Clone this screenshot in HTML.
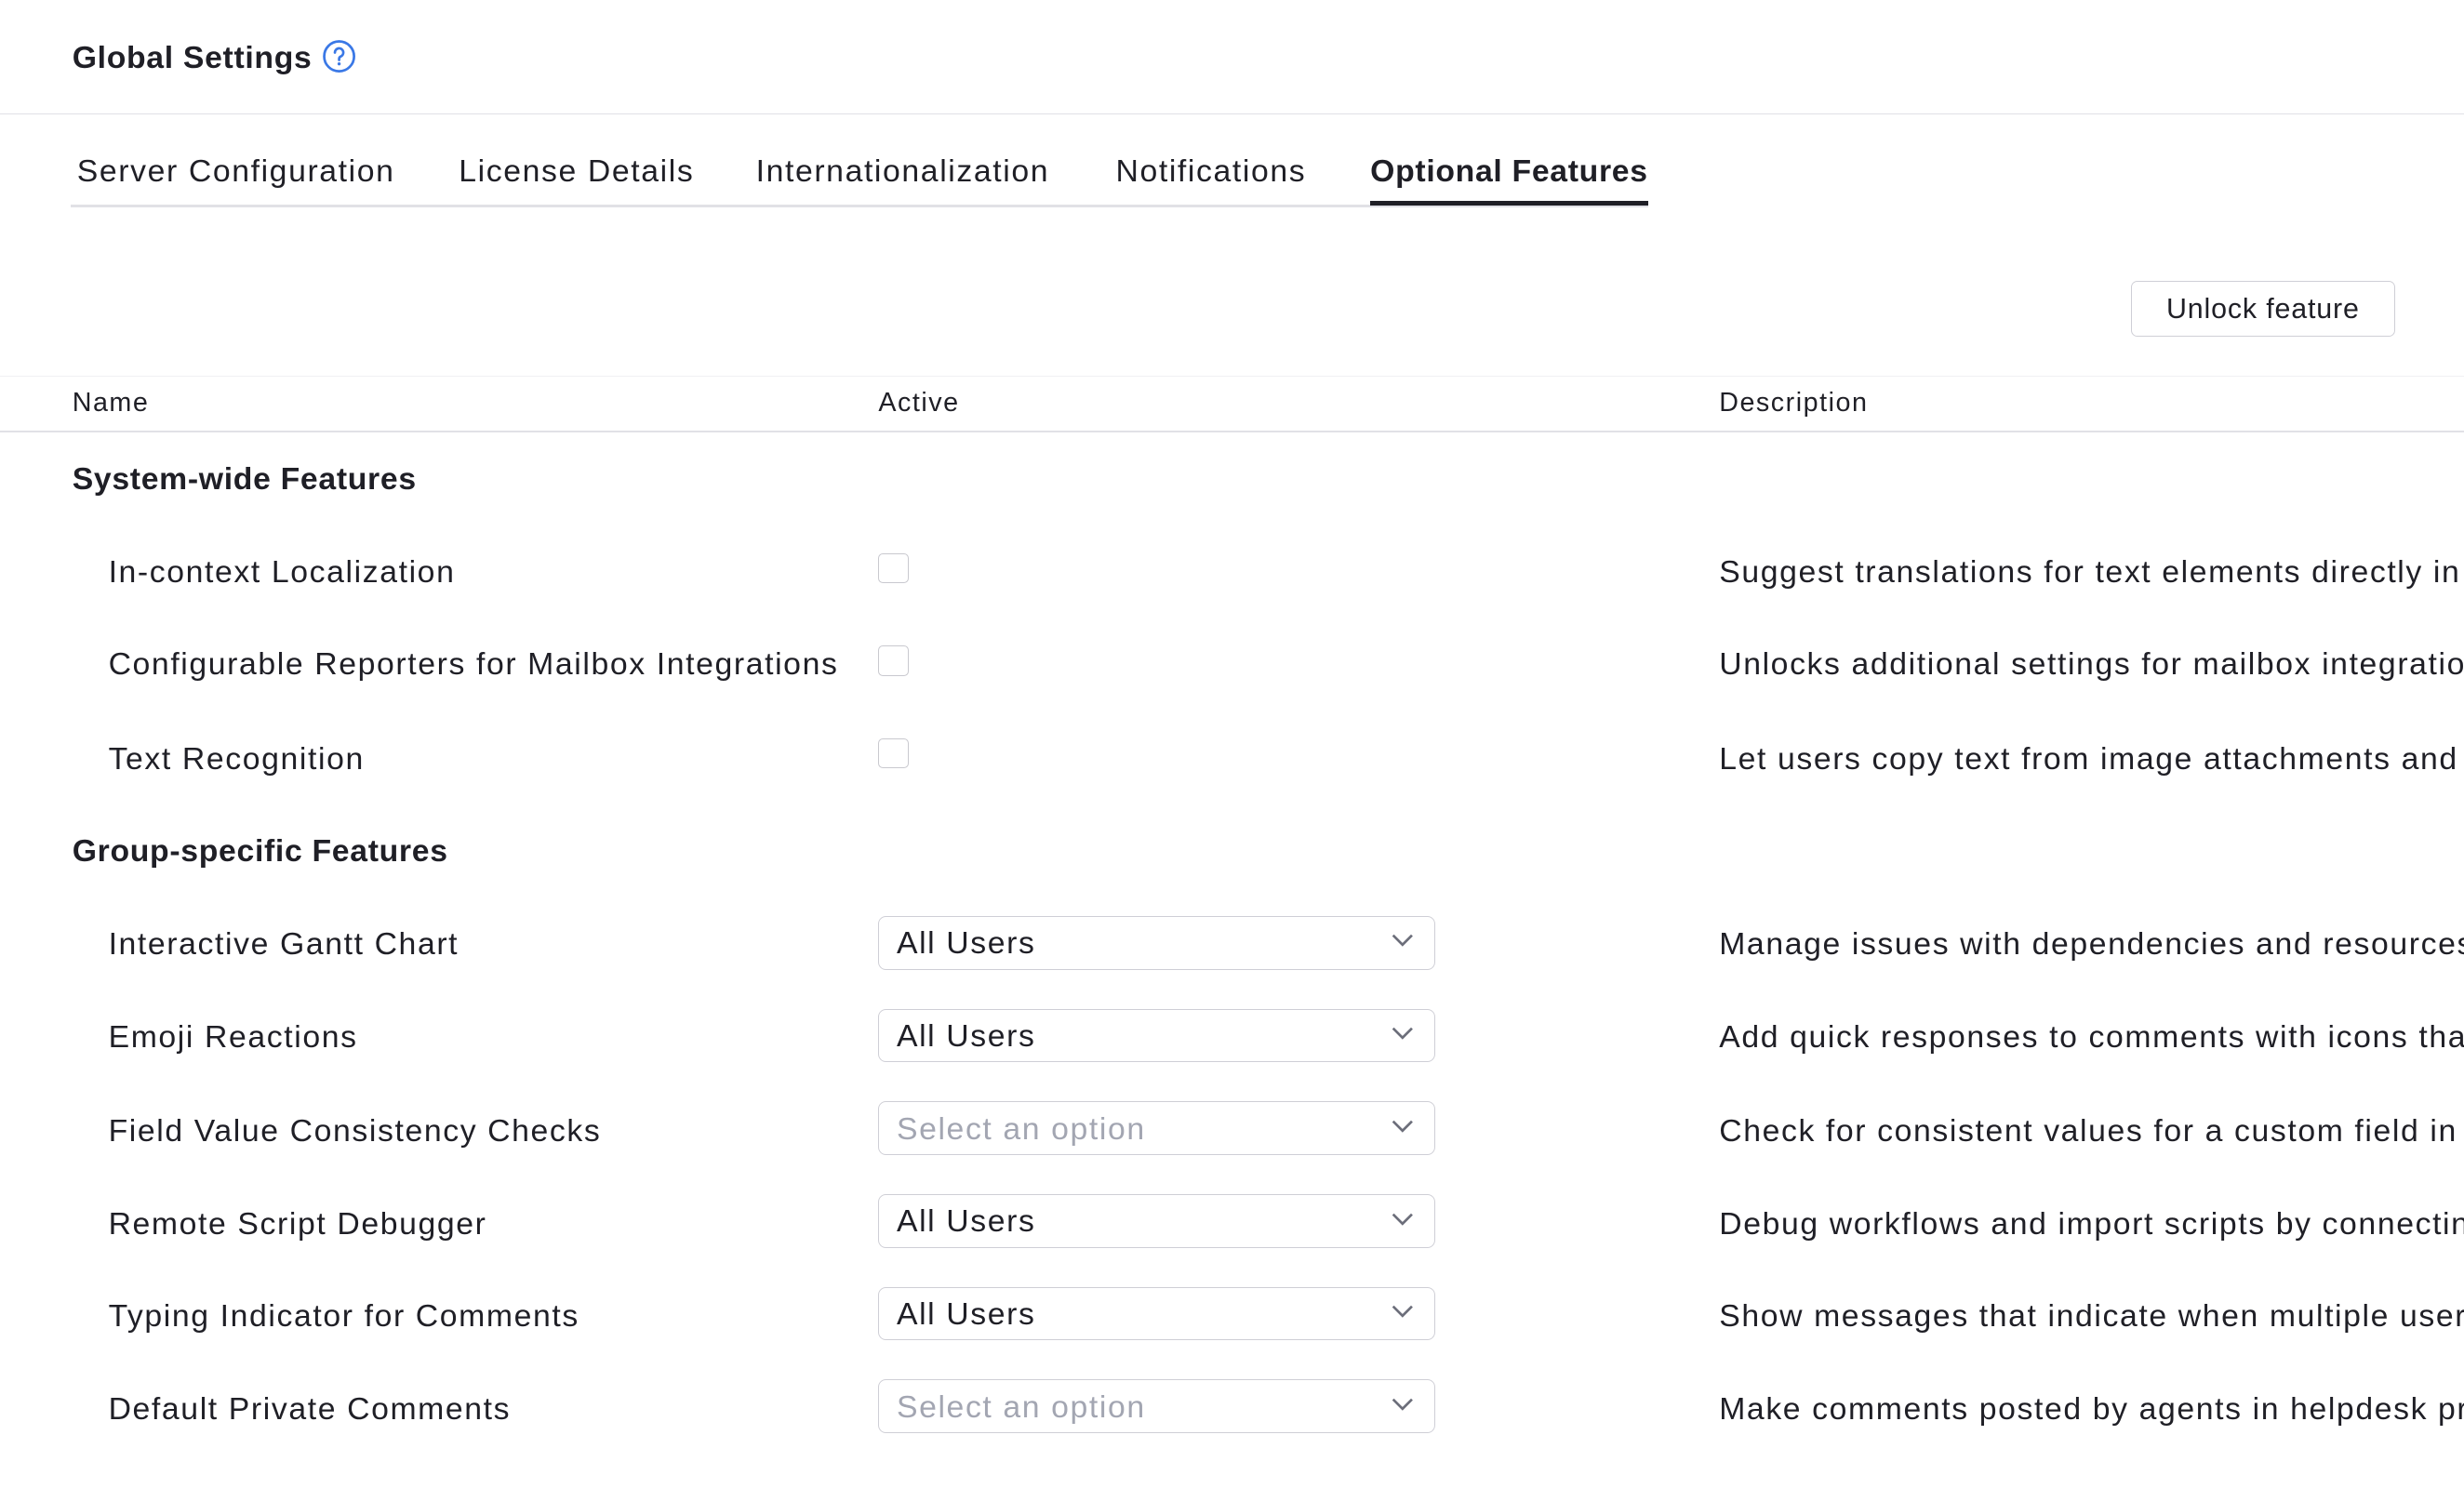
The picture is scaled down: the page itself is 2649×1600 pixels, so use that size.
<!DOCTYPE html>
<html><head><meta charset="utf-8"><style>
html,body{margin:0;padding:0;background:#fff;overflow:hidden;width:2649px;height:1600px}
#w{zoom:1.6894;width:1568px;height:947px;position:relative;font-family:"Liberation Sans",sans-serif;color:#1f1f26;overflow:hidden}
.a{position:absolute;white-space:nowrap}
.t{font-size:20px;line-height:24px;letter-spacing:0.95px}
.b{font-weight:bold;letter-spacing:0.4px}
.hl{position:absolute;left:0;right:0;height:1px;background:#e1e1e6}
.cb{position:absolute;left:559px;width:18px;height:18px;border:1px solid #c9c9cf;border-radius:3px;background:#fff}
.dd{position:absolute;left:559px;width:353px;height:33px;border:1px solid #cfcfd6;border-radius:5px;background:#fff}
.dd span{position:absolute;left:11px;top:5px;font-size:20px;line-height:24px;letter-spacing:0.95px}
.dd svg{position:absolute;right:13px;top:11px}
.ph{color:#a3a6b2}
.h{font-size:17px;line-height:20px;letter-spacing:0.9px}
</style></head><body><div id="w">
<div class="a b" style="left:46px;top:25px;font-size:20px;line-height:24px">Global Settings</div>
<svg class="a" style="left:205px;top:25px" width="22" height="22" viewBox="0 0 22 22"><circle cx="11" cy="11" r="9.5" fill="none" stroke="#3a78e6" stroke-width="1.6"/><path d="M8.3 8.6a2.7 2.7 0 1 1 3.7 2.5c-.7.3-1 .8-1 1.5v.7" fill="none" stroke="#3a78e6" stroke-width="1.6" stroke-linecap="round"/><circle cx="11" cy="15.8" r="1" fill="#3a78e6"/></svg>
<div class="hl" style="top:72px"></div>
<div class="a t" style="left:49px;top:97px">Server Configuration</div>
<div class="a t" style="left:292px;top:97px">License Details</div>
<div class="a t" style="left:481px;top:97px">Internationalization</div>
<div class="a t" style="left:710px;top:97px">Notifications</div>
<div class="a t b" style="left:872px;top:97px">Optional Features</div>
<div class="a" style="left:45px;top:130px;width:1004px;height:2px;background:#e1e1e6"></div>
<div class="a" style="left:872px;top:128px;width:177px;height:3px;background:#1f1f26"></div>
<div class="a" style="left:1356px;top:179px;width:167px;height:34px;border:1px solid #cfcfd6;border-radius:4px;font-size:18px;line-height:35px;text-align:center;letter-spacing:0.5px">Unlock feature</div>
<div class="hl" style="top:239px;background:#f0f0f3"></div>
<div class="a h" style="left:46px;top:247px">Name</div>
<div class="a h" style="left:559px;top:247px">Active</div>
<div class="a h" style="left:1094px;top:247px">Description</div>
<div class="hl" style="top:274px"></div>
<div class="a t b" style="left:46px;top:293px">System-wide Features</div>
<div class="a t" style="left:69px;top:352px">In-context Localization</div><div class="cb" style="top:352px"></div><div class="a t" style="left:1094px;top:352px">Suggest translations for text elements directly in the interface</div>
<div class="a t" style="left:69px;top:411px">Configurable Reporters for Mailbox Integrations</div><div class="cb" style="top:411px"></div><div class="a t" style="left:1094px;top:411px">Unlocks additional settings for mailbox integrations</div>
<div class="a t" style="left:69px;top:471px">Text Recognition</div><div class="cb" style="top:470px"></div><div class="a t" style="left:1094px;top:471px">Let users copy text from image attachments and more</div>
<div class="a t b" style="left:46px;top:530px">Group-specific Features</div>
<div class="a t" style="left:69px;top:589px">Interactive Gantt Chart</div><div class="dd" style="top:583px"><span>All Users</span><svg width="14" height="9"><path d="M1 1l6 6 6-6" fill="none" stroke="#6c6e7a" stroke-width="1.6"/></svg></div><div class="a t" style="left:1094px;top:589px">Manage issues with dependencies and resources</div>
<div class="a t" style="left:69px;top:648px">Emoji Reactions</div><div class="dd" style="top:642px"><span>All Users</span><svg width="14" height="9"><path d="M1 1l6 6 6-6" fill="none" stroke="#6c6e7a" stroke-width="1.6"/></svg></div><div class="a t" style="left:1094px;top:648px">Add quick responses to comments with icons that</div>
<div class="a t" style="left:69px;top:708px">Field Value Consistency Checks</div><div class="dd" style="top:701px"><span class="ph">Select an option</span><svg width="14" height="9"><path d="M1 1l6 6 6-6" fill="none" stroke="#6c6e7a" stroke-width="1.6"/></svg></div><div class="a t" style="left:1094px;top:708px">Check for consistent values for a custom field in</div>
<div class="a t" style="left:69px;top:767px">Remote Script Debugger</div><div class="dd" style="top:760px"><span>All Users</span><svg width="14" height="9"><path d="M1 1l6 6 6-6" fill="none" stroke="#6c6e7a" stroke-width="1.6"/></svg></div><div class="a t" style="left:1094px;top:767px">Debug workflows and import scripts by connecting</div>
<div class="a t" style="left:69px;top:826px">Typing Indicator for Comments</div><div class="dd" style="top:819px"><span>All Users</span><svg width="14" height="9"><path d="M1 1l6 6 6-6" fill="none" stroke="#6c6e7a" stroke-width="1.6"/></svg></div><div class="a t" style="left:1094px;top:826px">Show messages that indicate when multiple users</div>
<div class="a t" style="left:69px;top:885px">Default Private Comments</div><div class="dd" style="top:878px"><span class="ph">Select an option</span><svg width="14" height="9"><path d="M1 1l6 6 6-6" fill="none" stroke="#6c6e7a" stroke-width="1.6"/></svg></div><div class="a t" style="left:1094px;top:885px">Make comments posted by agents in helpdesk projects</div>
</div></body></html>
